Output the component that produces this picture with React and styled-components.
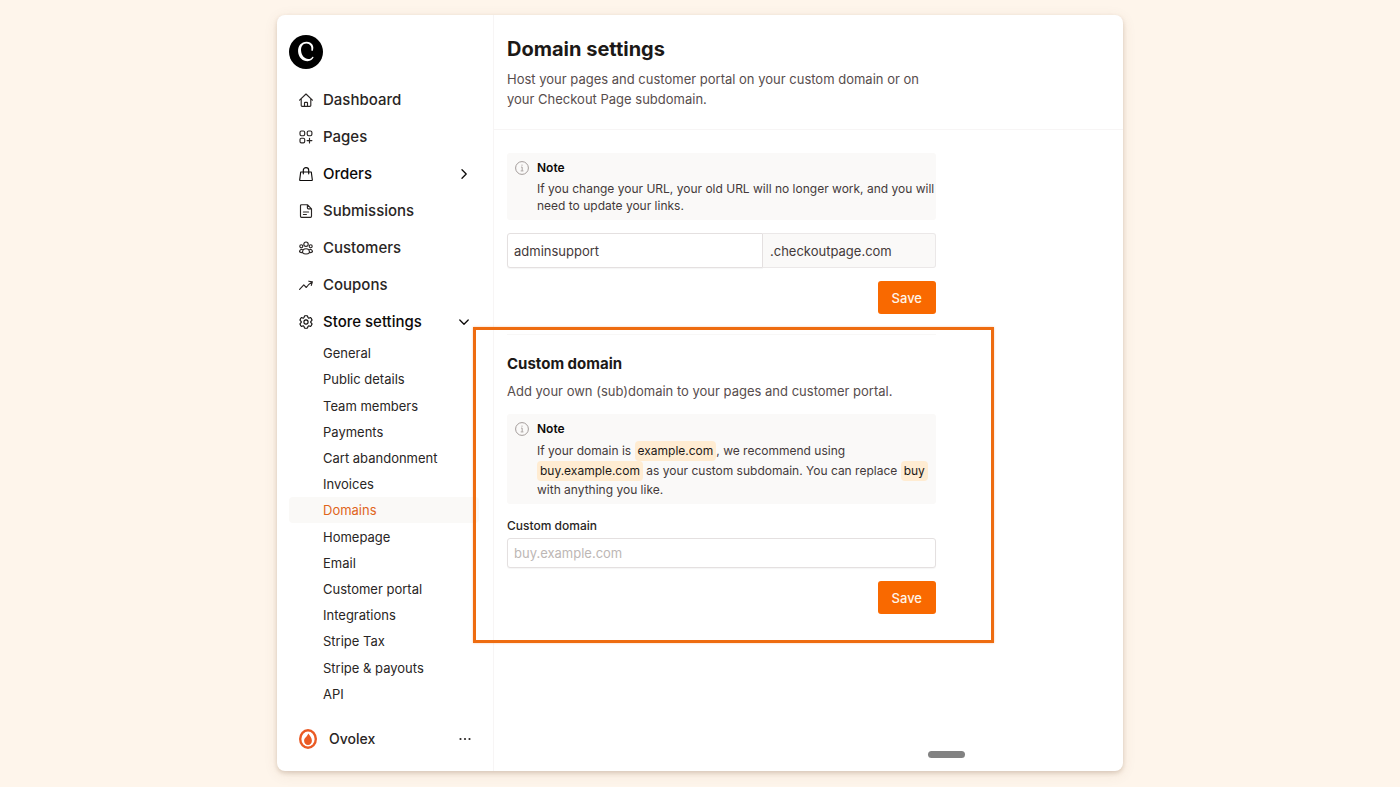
import React, { useState } from "react";
import styled, { createGlobalStyle, css } from "styled-components";

const GlobalStyle = createGlobalStyle`
  * {
    box-sizing: border-box;
  }

  body {
    margin: 0;
    background: #fef5eb;
    color: #292524;
    font-family: Inter, "Liberation Sans", sans-serif;
    font-size: 13px;
    line-height: 20px;
  }

  button,
  input {
    font: inherit;
  }
`;

const Page = styled.div`
  display: flex;
  justify-content: center;
  min-height: 100vh;
  padding: 15px 16px 16px;
`;

const Card = styled.div`
  display: flex;
  width: 100%;
  max-width: 846px;
  background: #fff;
  border-radius: 8px;
  box-shadow: 0 2px 4px rgba(120, 80, 50, 0.22), 0 3px 14px rgba(120, 80, 50, 0.1);
`;

const Sidebar = styled.aside`
  display: flex;
  flex-direction: column;
  flex: 0 0 217px;
  padding: 20px 14px 0 12px;
  border-right: 1px solid #f7f5f5;
`;

const Logo = styled.a`
  width: 34px;
  height: 34px;
  margin-bottom: 12px;

  svg {
    display: block;
  }
`;

const Nav = styled.nav`
  display: flex;
  flex-direction: column;
  flex: 1;
`;

const navRow = css`
  display: flex;
  align-items: center;
  gap: 10px;
  flex: 0 0 37px;
  padding: 0 10px;
  border: 0;
  background: none;
  color: ${props => (props.$strong ? "#0c0a09" : "#292524")};
  font-size: 15px;
  font-weight: 500;
  text-align: left;
  text-decoration: none;
  cursor: pointer;

  span {
    flex: 1;
  }
`;

const NavLink = styled.a`
  ${navRow}
`;

const NavToggle = styled.button`
  ${navRow}
`;

const SubList = styled.ul`
  display: grid;
  grid-auto-rows: minmax(26px, 1fr);
  flex: 1;
  margin: 0;
  padding: 0;
  list-style: none;
`;

const SubLink = styled.a`
  display: flex;
  align-items: center;
  height: 100%;
  padding-left: 34px;
  border-radius: 4px;
  background: ${props => (props.$active ? "#faf9f7" : "transparent")};
  color: ${props => (props.$active ? "#e0651c" : "#292524")};
  text-decoration: none;
`;

const Account = styled.div`
  display: flex;
  align-items: center;
  gap: 12px;
  height: 64px;
  padding: 0 8px 0 10px;
  font-size: 14px;
  font-weight: 500;

  span {
    flex: 1;
  }
`;

const IconButton = styled.button`
  display: flex;
  padding: 0;
  border: 0;
  background: none;
  color: #292524;
  cursor: pointer;
`;

const Main = styled.main`
  position: relative;
  flex: 1;
  min-width: 0;
`;

const Header = styled.header`
  padding: 20px 13px;
  border-bottom: 1px solid #f7f5f5;
`;

const Title = styled.h1`
  margin: 0 0 6px;
  color: #1c1917;
  font-size: 20px;
  font-weight: 700;
  line-height: 28px;
`;

const Lead = styled.p`
  max-width: 429px;
  margin: 0;
  color: #574d4d;
`;

const Content = styled.div`
  display: flex;
  flex-direction: column;
  gap: 20px;
  max-width: 455px;
  padding: 23px 13px;
`;

const Form = styled.form`
  position: relative;
  display: flex;
  flex-direction: column;
  gap: 13px;
`;

const CustomForm = styled(Form)`
  padding-top: 19px;
  border-top: 1px solid #f8f7f6;
`;

const Highlight = styled.div`
  position: absolute;
  inset: -8px -58px -29px -34px;
  border: 3px solid #ee6c10;
  box-shadow: 0 0 2px rgba(234, 106, 18, 0.35);
  pointer-events: none;
`;

const SectionTitle = styled.h2`
  margin: 0 0 7px;
  color: #1c1917;
  font-size: 15px;
  font-weight: 700;
  line-height: 20px;
`;

const NoteBox = styled.div`
  display: flex;
  gap: 8px;
  padding: 5px 0 6px 8px;
  border-radius: 3px;
  background: #faf9f8;
  color: #44393a;
  font-size: 12px;
  line-height: 17px;

  > svg {
    flex: none;
    margin-top: 3px;
  }
`;

const NoteTitle = styled.div`
  margin-bottom: 2px;
  color: #0c0a09;
  font-weight: 600;
  line-height: 20px;
`;

const Chip = styled.code`
  display: inline-block;
  padding: 1px 3px;
  border-radius: 4px;
  background: #ffecd2;
  color: #1c1917;
  font-family: inherit;
  font-size: inherit;
  line-height: 18px;
`;

const FieldRow = styled.div`
  display: flex;
  height: 35px;
`;

const Input = styled.input`
  width: 100%;
  min-width: 0;
  height: ${props => (props.$joined ? "35px" : "30px")};
  padding: 0 6px;
  border: 1px solid #e4e0e0;
  border-radius: ${props => (props.$joined ? "3px 0 0 3px" : "3px")};
  background: #fff;
  color: #44393a;
  box-shadow: 0 1px 1px rgba(0, 0, 0, 0.04);

  &::placeholder {
    color: #bdb7b5;
    opacity: 1;
  }
`;

const Suffix = styled.span`
  display: flex;
  align-items: center;
  flex: 0 0 173px;
  padding-left: 7px;
  border: 1px solid #ebe8e8;
  border-left: 0;
  border-radius: 0 3px 3px 0;
  background: #faf9f8;
  color: #44393a;
`;

const Field = styled.div`
  display: flex;
  flex-direction: column;
  gap: 3px;
`;

const Label = styled.label`
  font-size: 12px;
  font-weight: 500;
  line-height: 18px;
`;

const SaveButton = styled.button`
  align-self: flex-end;
  height: 33px;
  padding: 0 14px;
  border: 0;
  border-radius: 3px;
  background: #f96900;
  color: #fff4ea;
  font-weight: 500;
  cursor: pointer;
`;

const Handle = styled.div`
  position: absolute;
  right: 158px;
  bottom: 13px;
  width: 37px;
  height: 7px;
  border-radius: 4px;
  background: #828282;
`;

const Icon = ({ children, width = 14, height = 14, box = "0 0 14 14" }) => (
  <svg
    width={width}
    height={height}
    viewBox={box}
    fill="none"
    stroke="currentColor"
    strokeWidth="1.15"
    strokeLinecap="round"
    strokeLinejoin="round"
    aria-hidden="true"
  >
    {children}
  </svg>
);

const HomeIcon = () => (
  <Icon>
    <path d="M.6 7.2 7 1l6.400 6.200M2.200 5.900v6.600q0 .9.900.9h7.800q.9 0 .9-.9V5.900M5.500 13.300v-3.200q0-.7.7-.7h1.600q.7 0 .7.7v3.200" />
  </Icon>
);

const PagesIcon = () => (
  <Icon>
    <rect x="1" y="1" width="4.700" height="4.700" rx="1.400" />
    <rect x="8.200" y="1" width="4.700" height="4.700" rx="1.400" />
    <rect x="1" y="8.200" width="4.700" height="4.700" rx="1.400" />
    <path d="M10.500 8.200v4.800M8.100 10.600h4.800" />
  </Icon>
);

const BagIcon = () => (
  <Icon>
    <path d="M1.700 5h10.600l1 7.700q.1.800-.8.800h-11q-.9 0-.8-.8zM4.300 6.800V3.300a2.700 2.700 0 0 1 5.400 0v3.500" />
  </Icon>
);

const FileIcon = () => (
  <Icon>
    <path d="M8.400.7H2.500q-1 0-1 1v10.600q0 1 1 1h9q1 0 1-1V4.800zM8.400.7v3.200q0 .9.900.9h3.200M4.400 8h5.200M4.400 10.500h3" />
  </Icon>
);

const PeopleIcon = () => (
  <Icon>
    <circle cx="7" cy="3.200" r="2.200" />
    <circle cx="2.300" cy="5.200" r="1.500" />
    <circle cx="11.700" cy="5.200" r="1.500" />
    <path d="M3.500 11.600C3.500 9.200 5 7.700 7 7.700s3.500 1.500 3.500 3.900c-1.800 1.900-5.200 1.900-7 0ZM3.300 8.500C1.800 8.200.7 9.100.5 10.800c.8.600 1.800.9 2.900.8M10.700 8.500c1.500-.3 2.600.6 2.800 2.300-.8.600-1.800.9-2.900.8" />
  </Icon>
);

const TrendIcon = () => (
  <Icon>
    <path d="m.6 11.400 4.200-4.600 2.500 2.700q2.400-3.600 5.900-5.500M9.800 3.200l3.600.7-1.100 3.500" />
  </Icon>
);

const GearIcon = () => (
  <Icon box="2 2 20 20">
    <g strokeWidth="1.600">
      <path d="M9.594 3.940c.090-.542.560-.940 1.110-.940h2.593c.550 0 1.020.398 1.110.940l.213 1.281c.063.374.313.686.645.870.074.040.147.083.220.127.325.196.720.257 1.075.124l1.217-.456a1.125 1.125 0 0 1 1.370.490l1.296 2.247a1.125 1.125 0 0 1-.260 1.431l-1.003.827c-.293.241-.438.613-.430.992a7.723 7.723 0 0 1 0 .255c-.008.378.137.750.430.991l1.004.827c.424.350.534.955.260 1.430l-1.298 2.247a1.125 1.125 0 0 1-1.369.491l-1.217-.456c-.355-.133-.750-.072-1.076.124a6.470 6.470 0 0 1-.220.128c-.331.183-.581.495-.644.869l-.213 1.281c-.090.543-.560.940-1.110.940h-2.594c-.550 0-1.019-.398-1.110-.940l-.213-1.281c-.062-.374-.312-.686-.644-.870a6.520 6.520 0 0 1-.220-.127c-.325-.196-.720-.257-1.076-.124l-1.217.456a1.125 1.125 0 0 1-1.369-.490l-1.297-2.247a1.125 1.125 0 0 1 .260-1.431l1.004-.827c.292-.240.437-.613.430-.991a6.932 6.932 0 0 1 0-.255c.007-.380-.138-.751-.430-.992l-1.004-.827a1.125 1.125 0 0 1-.260-1.430l1.297-2.247a1.125 1.125 0 0 1 1.370-.491l1.216.456c.356.133.751.072 1.076-.124.072-.044.146-.086.220-.128.332-.183.582-.495.644-.869l.214-1.280Z" />
      <circle cx="12" cy="12" r="3" />
    </g>
  </Icon>
);

const InfoIcon = () => (
  <svg width="14" height="14" viewBox="0 0 14 14" fill="none" stroke="#a39c9a" aria-hidden="true">
    <circle cx="7" cy="7" r="6.400" />
    <path d="M6 6.100h1.200v3.600M5.700 9.900h2.700" strokeWidth=".9" />
    <circle cx="7" cy="4.100" r=".6" fill="#a39c9a" stroke="none" />
  </svg>
);

const ChevronRight = () => (
  <Icon width={10} height={10} box="0 0 10 10">
    <path d="M3 .8 7.200 5 3 9.200" strokeWidth="1.300" />
  </Icon>
);

const ChevronDown = () => (
  <Icon width={10} height={10} box="0 0 10 10">
    <path d="M.8 3 5 7.200 9.200 3" strokeWidth="1.300" />
  </Icon>
);

const links = [
  { label: "Dashboard", icon: HomeIcon },
  { label: "Pages", icon: PagesIcon },
  { label: "Orders", icon: BagIcon, expandable: true },
  { label: "Submissions", icon: FileIcon },
  { label: "Customers", icon: PeopleIcon },
  { label: "Coupons", icon: TrendIcon }
];

const settings = [
  "General",
  "Public details",
  "Team members",
  "Payments",
  "Cart abandonment",
  "Invoices",
  "Domains",
  "Homepage",
  "Email",
  "Customer portal",
  "Integrations",
  "Stripe Tax",
  "Stripe & payouts",
  "API"
];

const Note = ({ children }) => (
  <NoteBox>
    <InfoIcon />
    <div>
      <NoteTitle>Note</NoteTitle>
      {children}
    </div>
  </NoteBox>
);

export default function App() {
  const [subdomain, setSubdomain] = useState("adminsupport");
  const [domain, setDomain] = useState("");
  const onSubmit = e => e.preventDefault();

  return (
    <Page>
      <GlobalStyle />
      <Card>
        <Sidebar>
          <Logo href="#" aria-label="Home">
            <svg width="34" height="34" viewBox="0 0 34 34">
              <circle cx="17" cy="17" r="17" />
              <path
                d="M23.600 16C25.900 11.200 22.700 6.700 17.600 6.700 12.200 6.700 8.700 11 9.100 16.700c.4 5.600 4.300 9.500 9.500 9.500 2.900 0 5-1.400 6.100-4.100l-1.300-.4c-.9 1.600-2.300 2.400-4.200 2.300-3.700-.2-6.600-3.400-7.100-8-.5-4.300 1.600-7.500 5.300-7.500 3.600 0 5.700 3.100 4.900 7.100z"
                fill="#fff"
              />
            </svg>
          </Logo>
          <Nav>
            {links.map(({ label, icon: LinkIcon, expandable }) =>
              expandable ? (
                <NavToggle key={label} type="button" $strong>
                  <LinkIcon />
                  <span>{label}</span>
                  <ChevronRight />
                </NavToggle>
              ) : (
                <NavLink key={label} href="#">
                  <LinkIcon />
                  <span>{label}</span>
                </NavLink>
              )
            )}
            <NavToggle type="button" aria-expanded="true" $strong>
              <GearIcon />
              <span>Store settings</span>
              <ChevronDown />
            </NavToggle>
            <SubList>
              {settings.map(label => (
                <li key={label}>
                  <SubLink href="#" $active={label === "Domains"}>
                    {label}
                  </SubLink>
                </li>
              ))}
            </SubList>
          </Nav>
          <Account>
            <svg width="18" height="20" viewBox="0 0 18 20" aria-hidden="true">
              <ellipse cx="9" cy="10" rx="9" ry="10" fill="#ea5a24" />
              <ellipse cx="9" cy="10" rx="6.600" ry="7.600" fill="#fff" />
              <path d="M9.300 4.600C11 7 12.900 9 12.900 11.700c0 2.500-1.700 4.300-3.900 4.300s-3.900-1.800-3.900-4.200C5.100 9 8.300 7.800 9.300 4.600z" fill="#ea5a24" />
            </svg>
            <span>Ovolex</span>
            <IconButton type="button" aria-label="Account menu">
              <svg width="12" height="4" viewBox="0 0 12 4" fill="currentColor">
                <circle cx="1.500" cy="2" r="1.100" />
                <circle cx="6" cy="2" r="1.100" />
                <circle cx="10.500" cy="2" r="1.100" />
              </svg>
            </IconButton>
          </Account>
        </Sidebar>

        <Main>
          <Header>
            <Title>Domain settings</Title>
            <Lead>
              Host your pages and customer portal on your custom domain or on
              your Checkout Page subdomain.
            </Lead>
          </Header>
          <Content>
            <Form onSubmit={onSubmit}>
              <Note>
                If you change your URL, your old URL will no longer work, and
                you will need to update your links.
              </Note>
              <FieldRow>
                <Input
                  $joined
                  aria-label="Subdomain"
                  value={subdomain}
                  onChange={e => setSubdomain(e.target.value)}
                />
                <Suffix>.checkoutpage.com</Suffix>
              </FieldRow>
              <SaveButton type="submit">Save</SaveButton>
            </Form>

            <CustomForm onSubmit={onSubmit}>
              <div>
                <SectionTitle>Custom domain</SectionTitle>
                <Lead>
                  Add your own (sub)domain to your pages and customer portal.
                </Lead>
              </div>
              <Note>
                If your domain is <Chip>example.com</Chip>, we recommend using{" "}
                <Chip>buy.example.com</Chip> as your custom subdomain. You can
                replace <Chip>buy</Chip> with anything you like.
              </Note>
              <Field>
                <Label htmlFor="custom-domain">Custom domain</Label>
                <Input
                  id="custom-domain"
                  placeholder="buy.example.com"
                  value={domain}
                  onChange={e => setDomain(e.target.value)}
                />
              </Field>
              <SaveButton type="submit">Save</SaveButton>
              <Highlight />
            </CustomForm>
          </Content>
          <Handle />
        </Main>
      </Card>
    </Page>
  );
}
